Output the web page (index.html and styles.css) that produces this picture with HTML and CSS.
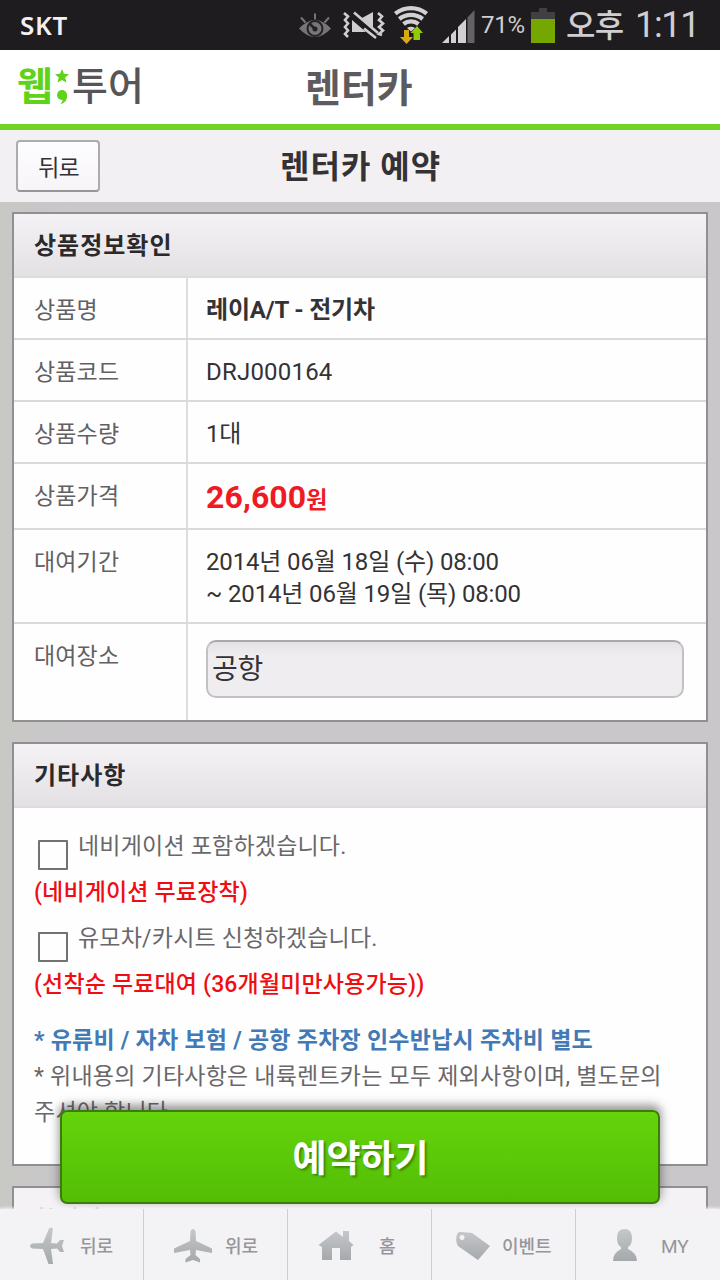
FILE: index.html
```
<!DOCTYPE html>
<html lang="ko">
<head>
<meta charset="utf-8">
<title>렌터카 예약</title>
<link rel="stylesheet" href="styles.css">
</head>
<body>
<div class="screen">
  <div class="status">
    <span class="carrier">SKT</span>
    <svg class="status-icons" width="180" height="50" viewBox="0 0 180 50">
      <path d="M0 28.500Q16 11.500 32 28.500Q16 45.500 0 28.500Z" fill="#777577"/>
      <circle cx="16" cy="28.500" r="7.500" fill="#777577" stroke="#252225" stroke-width="2"/>
      <circle cx="16" cy="29" r="2.500" fill="#252225"/>
      <path d="M11 24L16 29" stroke="#252225" stroke-width="2.500"/>
      <path d="M2 17.500l4.500 5M16 13.500v6M30 17.500l-4.500 5" stroke="#777577" stroke-width="2"/>
      <path d="M53 20L67 32H53Z" fill="#cfcdcf"/>
      <path d="M63 18L74 12V27.500Z" fill="#cfcdcf"/>
      <g fill="none" stroke="#cfcdcf" stroke-width="2.600">
        <path d="M55 12.500L79 33M65 28.500L77 38" />
        <path d="M45 13l4 3.500-3 3.500 3 3.500-3 3.500 3 3.500-3 3.500 3 3M79 13l4 3.500-3 3.500 4 3.500-4 3.500 4 3.500-4 3.500 3 1"/>
      </g>
      <g fill="none" stroke="#d2d0d2" stroke-width="4.200">
        <path d="M96.300 13.600A25 25 0 0 1 127.700 13.600"/>
        <path d="M100.300 19A18.500 18.500 0 0 1 123.700 19"/>
        <path d="M104.500 24A12 12 0 0 1 119.500 24"/>
      </g>
      <path d="M108 28Q112 25.500 116 28L112 31.500z" fill="#d2d0d2"/>
      <path d="M105 30h5v7h4l-6.500 7-6.500-7h4z" fill="#d9a911"/>
      <path d="M114.500 40h6.500v-7h3l-6-7-6.500 7h3z" fill="#94c908"/>
      <path d="M143 43l7-7v7zM152 34.500l5-5V43h-5zM159 27l8-8v24h-8z" fill="#d2d0d2"/>
      <path d="M168.500 17.500l7-7.500v33h-7z" fill="#646264"/>
    </svg>
    <span class="percent">71%</span>
    <svg class="battery" width="24" height="50" viewBox="0 0 24 50"><path d="M8 8h8v4h8v8H0v-8h8z" fill="#414041"/><path d="M0 19h24v24H0z" fill="#76a600"/></svg>
    <span class="ampm">오후</span>
    <span class="clock">1:11</span>
  </div>
  <header class="brandbar">
    <div class="logo">
      <span class="logo-web">웹</span>
      <svg width="16" height="42" viewBox="0 0 16 42"><path d="M8 3l2 4.800 5 .4-3.800 3.300 1.200 5L8 13.900l-4.400 2.600 1.200-5L1 8.200l5-.4z" fill="#5fd31a"/><circle cx="8" cy="29" r="5" fill="#5fd31a"/><path d="M13 29q1 7-7 9.500q4-4 2-8z" fill="#5fd31a"/></svg>
      <span class="logo-tour">투어</span>
    </div>
    <h1 class="section">렌터카</h1>
  </header>
  <div class="titlebar">
    <button class="back">뒤로</button>
    <h2 class="title">렌터카 예약</h2>
  </div>
  <main class="content">
    <section class="card">
      <h3 class="card-head">상품정보확인</h3>
      <div class="row"><div class="label">상품명</div><div class="value strong">레이A/T - 전기차</div></div>
      <div class="row"><div class="label">상품코드</div><div class="value code">DRJ000164</div></div>
      <div class="row"><div class="label">상품수량</div><div class="value">1대</div></div>
      <div class="row row-price"><div class="label">상품가격</div><div class="value price">26,600<span class="won">원</span></div></div>
      <div class="row row-period"><div class="label">대여기간</div><div class="value">2014년 06월 18일 (수) 08:00<br>~ 2014년 06월 19일 (목) 08:00</div></div>
      <div class="row row-place"><div class="label">대여장소</div><div class="value"><div class="select">공항</div></div></div>
    </section>
    <section class="card card-etc">
      <h3 class="card-head">기타사항</h3>
      <div class="etc">
        <label class="check"><span class="box"></span><span class="check-text">네비게이션 포함하겠습니다.</span></label>
        <p class="red">(네비게이션 무료장착)</p>
        <label class="check"><span class="box"></span><span class="check-text">유모차/카시트 신청하겠습니다.</span></label>
        <p class="red">(선착순 무료대여 (36개월미만사용가능))</p>
        <p class="blue">* 유류비 / 자차 보험 / 공항 주차장 인수반납시 주차비 별도</p>
        <p class="note">* 위내용의 기타사항은 내륙렌트카는 모두 제외사항이며, 별도문의<br>주셔야 합니다.</p>
      </div>
    </section>
    <section class="card card-last"><h3 class="card-head">할인카드</h3></section>
    <button class="reserve">예약하기</button>
  </main>
  <nav class="tabs">
    <a class="tab"><svg width="36" height="38" viewBox="0 0 36 38"><path class="ico" d="M3 16.500L14 16L20 1.500Q21 .5 24 1L22 16L28 16.500L31 13H35L33 19L35 25H31L28 21.500L22 22L24 37H19.500L14 22L3 21.500Q-1 19 3 16.500Z"/></svg><span>뒤로</span></a>
    <a class="tab tab-up"><svg width="40" height="38" viewBox="0 0 40 38"><path class="ico" d="M17.500 4Q20 0 22.500 4L23 14L39 21.500V26L23 23L22.500 28L27 32V35.500L20 33L12.500 35.500V32L17.500 28L17 23L1 26V21.500L17 14Z"/></svg><span>위로</span></a>
    <a class="tab tab-home"><svg width="36" height="38" viewBox="0 0 36 38"><path class="ico" d="M18 4.500L25 10V4H31V14L35.500 18L33 20V33H22V21H14V33H4V20L.5 18Z"/></svg><span>홈</span></a>
    <a class="tab tab-event"><svg width="36" height="38" viewBox="0 0 36 38"><path class="ico" fill-rule="evenodd" d="M2 7Q4 4 7 5L17 6L35 19L23 33L3 19Q0 14 2 7ZM7 8a2.500 2.500 0 1 0 .1 0Z"/></svg><span>이벤트</span></a>
    <a class="tab tab-my"><svg width="26" height="38" viewBox="0 0 26 38"><path class="ico" d="M5 11Q5 2 12.500 2T20 11Q20 18 16 20V22Q25 26 25 34H1Q1 26 9 22V20Q5 18 5 11Z"/></svg><span>MY</span></a>
  </nav>
  <svg width="0" height="0" class="defs"><linearGradient id="steel" x1="0" y1="0" x2="0" y2="1"><stop offset="0" stop-color="#c5c7c9"/><stop offset="1" stop-color="#a5a9ac"/></linearGradient></svg>
</div>
</body>
</html>
```
FILE: styles.css
```
* { box-sizing: border-box; }
body { margin: 0; font-family: Roboto, "Noto Sans CJK KR", sans-serif; color: #343235; }
h1, h2, h3, p { margin: 0; }
button { font-family: inherit; padding: 0; }
.screen { width: 720px; height: 1280px; display: flex; flex-direction: column; overflow: hidden; position: relative; background: #c9c7c9; }
.defs { position: absolute; }

.status { flex: none; height: 50px; background: #1f1c20; color: #d0ced0; display: flex; align-items: center; white-space: nowrap; }
.carrier { width: 299px; padding-left: 20px; font: 600 26px/48px "Noto Sans", sans-serif; letter-spacing: .7px; color: #f2f0f2; }
.percent { width: 52px; padding-left: 2px; font-size: 24px; letter-spacing: -.2px; line-height: 52px; }
.status-icons, .battery { flex: none; }
.ampm { width: 68px; margin-left: 11px; font: 500 32px/46px "Noto Sans CJK KR", sans-serif; height: 50px; letter-spacing: -.8px; }
.clock { font-size: 36px; line-height: 50px; letter-spacing: -1.3px; padding-left: 1px; }

.brandbar { flex: none; height: 80px; background: #fff; border-bottom: 6px solid #70d326; display: flex; }
.logo { width: 305px; padding-left: 17px; display: flex; align-items: center; font-size: 39px; line-height: 78px; }
.logo-web { color: #5fd31a; font-weight: 700; width: 37px; }
.logo-tour { color: #575558; font-weight: 500; margin-left: 2px; }
.section { font-size: 39px; line-height: 78px; font-weight: 700; color: #5d5b5e; }

.titlebar { flex: none; height: 72px; background: #f2f0f3; display: flex; padding: 10px 0 0 16px; }
.back { width: 84px; height: 52px; border: 2px solid #adabae; border-bottom-color: #979598; border-radius: 4px; background: linear-gradient(#fdfcfe, #f7f5f8); font-size: 23px; line-height: 50px; padding: 2px 0 0 1px; color: #343235; letter-spacing: -.8px; }
.title { margin-left: 180px; font-size: 32px; line-height: 55px; font-weight: 700; letter-spacing: 1px; }

.content { flex: none; height: 1007px; padding: 10px 12px 0; display: flex; flex-direction: column; gap: 20px; position: relative; overflow: hidden; background: linear-gradient(90deg, #c8c8c5, #c9c7ca 80px); }
.card { flex: none; border: 2px solid #918f92; background: #fefefe; height: 510px; }
.card-head { height: 64px; padding-left: 20px; border-bottom: 2px solid #dddbde; background: linear-gradient(#f4f2f5, #e3e1e4); font-size: 24px; line-height: 65px; font-weight: 700; letter-spacing: 1px; color: #2b292c; }
.row { display: flex; height: 62px; border-bottom: 2px solid #dbd9dc; font-size: 24px; line-height: 32px; }
.label { width: 174px; flex: none; border-right: 2px solid #dfdde0; padding: 17px 0 0 20px; color: #626063; font-size: 23px; letter-spacing: .15px; }
.value { padding: 16px 0 0 18px; white-space: nowrap; letter-spacing: -.15px; }
.code { letter-spacing: .2px; }
.strong { font-weight: 700; letter-spacing: -.2px; }
.row-price { height: 66px; }
.price { color: #ed1c24; font-size: 32px; font-weight: 700; padding-top: 17px; letter-spacing: .1px; }
.won { font-size: 23px; }
.row-period { height: 94px; }
.row-place { height: 96px; border-bottom: 0; }
.select { width: 478px; height: 58px; border: 2px solid #c3c1c4; border-top-color: #aaa8ab; border-radius: 10px; background: linear-gradient(#e4e2e5, #efedf0 14px); padding-left: 4px; font-size: 28px; line-height: 55px; }

.card-etc { height: 424px; }
.etc { padding: 18px 20px 0; white-space: nowrap; color: #69676a; font-size: 23px; letter-spacing: .2px; }
.check { display: flex; height: 46px; padding-left: 4px; }
.box { width: 30px; height: 30px; margin-top: 14px; border: 2.500px solid #737174; border-radius: 1px; }
.check-text { margin-left: 10px; line-height: 42px; }
.red { height: 46px; line-height: 42px; color: #f00d12; font-weight: 500; letter-spacing: .15px; }
.blue { margin-top: 10px; line-height: 41px; height: 36px; color: #427ab5; font-weight: 700; letter-spacing: .25px; }
.note { line-height: 36px; padding-top: 3px; letter-spacing: .22px; }
.card-last .card-head { background: #f4f2f5; color: #b5b3b6; }
.card-last { height: 80px; }
.reserve { position: absolute; left: 60px; top: 908px; width: 600px; height: 94px; border: 2px solid #3b7d08; border-radius: 7px; background: linear-gradient(#65d40b, #53bd06); box-shadow: 0 -4px 10px 1px rgba(50, 45, 50, .5); color: #fff; font-size: 37px; line-height: 90px; padding: 3px 0 0 1px; font-weight: 700; text-shadow: 2px 2px 2px rgba(40, 90, 0, .55); }

.tabs { flex: none; height: 71px; position: relative; display: grid; grid-template-columns: repeat(5, 144px); background: #f3f2f4; box-shadow: 0 -1px 3px #f3f2f4; }
.tab { display: flex; align-items: center; padding: 2px 0 0 29px; color: #97959a; font-size: 18px; line-height: 36px; border-right: 1px solid #cfcdd0; }
.tab svg { flex: none; }
.tab span { margin-left: 15px; padding-top: 3px; font-weight: 500; }
.tab-up span { margin-left: 12px; }
.tab-home { padding-left: 30px; }
.tab-home span { margin-left: 25px; }
.tab-event { padding-left: 23px; }
.tab-event span { margin-left: 11px; }
.tab-my { padding-left: 36px; border-right: 0; }
.tab-my span { margin-left: 23px; font-size: 19px; font-weight: 400; }
.ico { fill: url(#steel); }
```
